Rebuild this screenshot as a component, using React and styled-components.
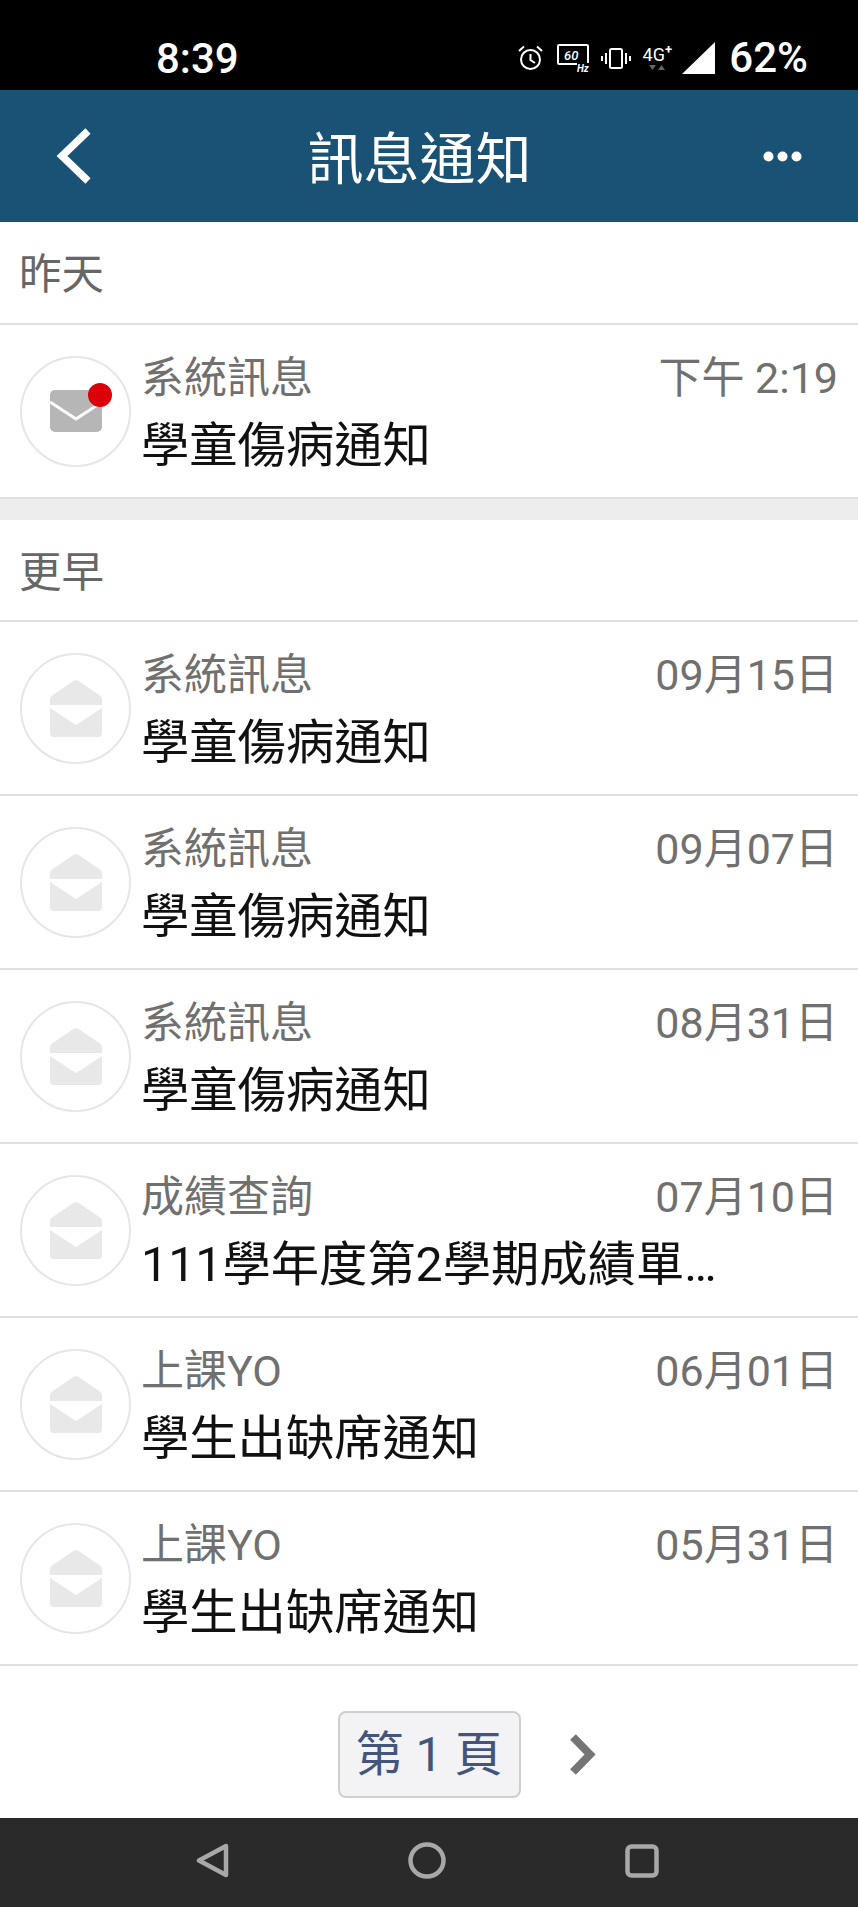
import React from 'react';
import styled, { createGlobalStyle } from 'styled-components';

const GlobalStyle = createGlobalStyle`
  html, body { margin: 0; padding: 0; background: #fff; }
  body { font-family: Roboto, "Noto Sans CJK TC", sans-serif; }
  * { box-sizing: border-box; }
`;

const Page = styled('div')`
  width: 858px;
  height: 1907px;
  display: flex;
  flex-direction: column;
  overflow: hidden;
  background: #fff;
`;

const StatusBar = styled('div')`
  height: 90px;
  background: #000;
  color: #fff;
  display: flex;
  align-items: center;
  justify-content: space-between;
  padding: 26px 50px 0 156px;
  font-weight: 500;
  font-size: 42px;
`;

const StatusIcons = styled('div')`
  display: flex;
  align-items: center;
`;

const StatusIcon = styled('svg')`
  display: block;
  margin-right: ${(p) => p.$gap}px;
`;

const Network = styled('div')`
  display: flex;
  flex-direction: column;
  align-items: center;
  width: 34px;
  margin-right: 8px;
  font-size: 18px;
  font-weight: 400;
  line-height: 18px;
  white-space: nowrap;
  sup {
    font-size: 13px;
    line-height: 0;
    font-weight: 700;
  }
`;

const Battery = styled('span')`
  font-size: 42px;
  line-height: 48px;
`;

const Header = styled('header')`
  height: 132px;
  background: #1a5276;
  color: #fff;
  display: flex;
  align-items: center;
  justify-content: space-between;
  padding: 0 56px;
`;

const HeaderTitle = styled('h1')`
  margin: 8px 16px 0 0;
  font-size: 56px;
  font-weight: 400;
  line-height: 64px;
`;

const SectionTitle = styled('div')`
  height: ${(p) => (p.$first ? 103 : 102)}px;
  padding: 26px 0 0 19px;
  font-size: 42.5px;
  line-height: 54px;
  color: #666;
  border-bottom: 2px solid #e0e0e0;
`;

const Row = styled('div')`
  height: 174px;
  display: flex;
  align-items: center;
  padding: 0 20px 0 20px;
  gap: 10px;
  border-bottom: 2px solid #e0e0e0;
`;

const Avatar = styled('div')`
  position: relative;
  flex: none;
  width: 111px;
  height: 111px;
  border-radius: 50%;
  border: 2px solid #e6e6e6;
  display: flex;
  align-items: center;
  justify-content: center;
`;

const UnreadDot = styled('span')`
  position: absolute;
  left: 66px;
  top: 25px;
  width: 24px;
  height: 24px;
  border-radius: 50%;
  background: #dc0008;
`;

const RowBody = styled('div')`
  flex: 1;
  min-width: 0;
  display: flex;
  flex-direction: column;
  padding-top: 7px;
`;

const RowTop = styled('div')`
  display: flex;
  justify-content: space-between;
  font-size: 43px;
  line-height: 56px;
  color: #707070;
`;

const RowTitle = styled('div')`
  margin-top: 7px;
  font-size: 48.3px;
  line-height: 66px;
  color: #111;
  white-space: nowrap;
`;

const Divider = styled('div')`
  height: 21px;
  background: #ededed;
`;

const Pager = styled('div')`
  flex: 1;
  display: grid;
  grid-template-columns: 1fr 183px 1fr;
  align-items: start;
  padding-top: 45px;
`;

const PageButton = styled('div')`
  grid-column: 2;
  height: 87px;
  border: 2px solid #cfcfcf;
  border-radius: 8px;
  background: #f3f3f5;
  color: #43557a;
  font-size: 48px;
  line-height: 83px;
  text-align: center;
  white-space: pre;
`;

const NextArrow = styled('svg')`
  display: block;
  margin: 23px 0 0 48px;
`;

const NavBar = styled('nav')`
  height: 89px;
  background: #2a2a2a;
  display: flex;
  align-items: center;
  gap: 179px;
  padding: 0 0 4px 196px;
`;

const MailClosed = () => (
  <svg width="52" height="42" viewBox="0 0 52 42">
    <rect width="52" height="42" rx="5" fill="#b6b6b6" />
    <path d="M0 12 L26 29 L52 12" fill="none" stroke="#fff" strokeWidth="3" />
  </svg>
);

const MailOpen = () => (
  <svg width="52" height="57" viewBox="0 0 52 57">
    <path d="M23 1.2 Q26 -0.6 29 1.2 L50 15.5 Q52 17 52 19.5 V25 H0 V19.5 Q0 17 2 15.5 Z" fill="#e8e8e8" />
    <path d="M0 28 L26 45 L52 28 V53 Q52 57 48 57 H4 Q0 57 0 53 Z" fill="#e8e8e8" />
  </svg>
);

const messages = [
  { name: '系統訊息', title: '學童傷病通知', time: '09月15日' },
  { name: '系統訊息', title: '學童傷病通知', time: '09月07日' },
  { name: '系統訊息', title: '學童傷病通知', time: '08月31日' },
  { name: '成績查詢', title: '111學年度第2學期成績單…', time: '07月10日' },
  { name: '上課YO', title: '學生出缺席通知', time: '06月01日' },
  { name: '上課YO', title: '學生出缺席通知', time: '05月31日' },
];

const App = () => (
  <Page>
    <GlobalStyle />
    <StatusBar>
      <span>8:39</span>
      <StatusIcons>
        <StatusIcon $gap={14} width="25" height="26" viewBox="0 0 25 26" fill="none" stroke="#fff" strokeWidth="2">
          <circle cx="12.5" cy="14.5" r="9.5" />
          <path d="M12.5 9 V15 L17 18 M1 6 L6 1.5 M24 6 L19 1.5" />
        </StatusIcon>
        <StatusIcon $gap={11} width="33" height="30" viewBox="0 0 33 30" fill="none" stroke="#fff" strokeWidth="2">
          <path d="M20 21 H2 Q1 21 1 20 V3 Q1 2 2 2 H30 Q31 2 31 3 V20" />
          <text x="7" y="17" fontSize="13" fontStyle="italic" fontFamily="Roboto, sans-serif" fill="#fff" stroke="none">60</text>
          <text x="20" y="29" fontSize="10" fontStyle="italic" fontWeight="700" fontFamily="Roboto, sans-serif" fill="#fff" stroke="none">Hz</text>
        </StatusIcon>
        <StatusIcon $gap={9} width="30" height="21" viewBox="0 0 30 21" fill="none" stroke="#fff" strokeWidth="2">
          <rect x="9" y="1" width="12" height="19" rx="1.5" />
          <path d="M5 5 V16 M25 5 V16 M1 8 V13 M29 8 V13" />
        </StatusIcon>
        <Network>
          <span>4G<sup>+</sup></span>
          <svg width="18" height="7" viewBox="0 0 18 7">
            <path d="M1 1 H8 L4.5 6 Z M10 6 H17 L13.5 1 Z" fill="#666" />
          </svg>
        </Network>
        <StatusIcon $gap={14} width="33" height="32" viewBox="0 0 33 32">
          <path d="M33 0 V32 H0 Z" fill="#fff" />
        </StatusIcon>
        <Battery>62%</Battery>
      </StatusIcons>
    </StatusBar>

    <Header>
      <svg width="36" height="56" viewBox="0 0 36 56" fill="none" stroke="#fff" strokeWidth="7.5">
        <path d="M32 3 L6 28 L32 53" />
      </svg>
      <HeaderTitle>訊息通知</HeaderTitle>
      <svg width="39" height="11" viewBox="0 0 39 11" fill="#fff">
        <circle cx="5.5" cy="5.5" r="5" />
        <circle cx="19.5" cy="5.5" r="5" />
        <circle cx="33.5" cy="5.5" r="5" />
      </svg>
    </Header>

    <SectionTitle $first>昨天</SectionTitle>
    <Row>
      <Avatar>
        <MailClosed />
        <UnreadDot />
      </Avatar>
      <RowBody>
        <RowTop>
          <span>系統訊息</span>
          <span>下午 2:19</span>
        </RowTop>
        <RowTitle>學童傷病通知</RowTitle>
      </RowBody>
    </Row>
    <Divider />

    <SectionTitle>更早</SectionTitle>
    {messages.map((m) => (
      <Row key={m.time}>
        <Avatar>
          <MailOpen />
        </Avatar>
        <RowBody>
          <RowTop>
            <span>{m.name}</span>
            <span>{m.time}</span>
          </RowTop>
          <RowTitle>{m.title}</RowTitle>
        </RowBody>
      </Row>
    ))}

    <Pager>
      <PageButton>第 1 頁</PageButton>
      <NextArrow width="27" height="41" viewBox="0 0 27 41" fill="none" stroke="#757575" strokeWidth="8">
        <path d="M4 3 L21 20.5 L4 38" />
      </NextArrow>
    </Pager>

    <NavBar>
      <svg width="33" height="35" viewBox="0 0 33 35" fill="none" stroke="#a8a8a8" strokeWidth="4.5" strokeLinejoin="round">
        <path d="M30 3 V32 L3 17.5 Z" />
      </svg>
      <svg width="38" height="37" viewBox="0 0 38 37" fill="none" stroke="#a8a8a8" strokeWidth="4.5">
        <ellipse cx="19" cy="18.5" rx="16.5" ry="16" />
      </svg>
      <svg width="34" height="34" viewBox="0 0 34 34" fill="none" stroke="#a8a8a8" strokeWidth="4.5">
        <rect x="2.5" y="2.5" width="29" height="29" rx="4" />
      </svg>
    </NavBar>
  </Page>
);

export default App;
